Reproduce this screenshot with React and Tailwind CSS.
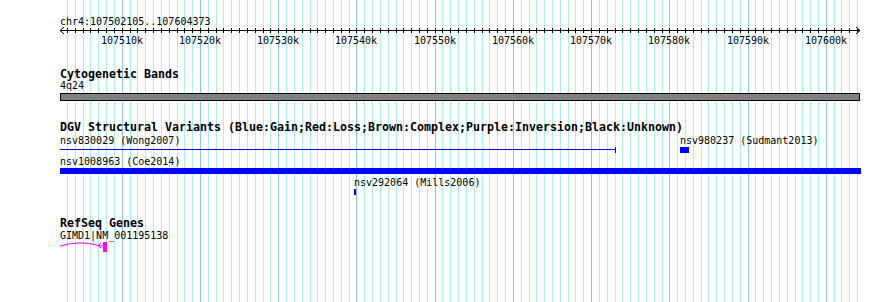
import React from 'react';

const START = 107502105;
const END = 107604373;
const LEFT = 60;
const WIDTH = 800;

const toX = (bp) => Math.round(LEFT + ((bp - START) * WIDTH) / (END - START));

// one entry per kb inside the panel
const ticks = [];
for (let k = Math.ceil(START / 1000); k * 1000 <= END; k++) {
  const x = toX(k * 1000);
  if (x >= LEFT && x <= LEFT + WIDTH) ticks.push({ k, x, major: k % 10 === 0 });
}

const GridLines = () => (
  <svg className="absolute inset-0" width="890" height="302">
    {ticks.map((t) => (
      <line
        key={t.k}
        x1={t.x + 0.5}
        x2={t.x + 0.5}
        y1="0"
        y2="302"
        stroke={t.major ? '#8cc8ee' : '#aeeef0'}
        strokeWidth="1"
      />
    ))}
  </svg>
);

const Ruler = () => (
  <svg width="890" height="68">
    <text x={LEFT} y="25" fontSize="10" fill="#000">
      chr4:107502105..107604373
    </text>
    <line x1={LEFT} x2={LEFT + WIDTH} y1="30.5" y2="30.5" stroke="#000" />
    <polyline points={`${LEFT + 4},27 ${LEFT},30.5 ${LEFT + 4},34`} fill="none" stroke="#000" />
    <polyline
      points={`${LEFT + WIDTH - 4},27 ${LEFT + WIDTH},30.5 ${LEFT + WIDTH - 4},34`}
      fill="none"
      stroke="#000"
    />
    {ticks.map((t) => (
      <line key={t.k} x1={t.x + 0.5} x2={t.x + 0.5} y1="28" y2="33" stroke="#000" />
    ))}
    {ticks
      .filter((t) => t.major)
      .map((t) => (
        <text key={t.k} x={t.x} y="43.5" fontSize="10" textAnchor="middle" fill="#000">
          {t.k}k
        </text>
      ))}
  </svg>
);

const TrackTitle = ({ children }) => (
  <div className="h-[13px] pl-[60px] text-[11.63px] leading-[13px] font-bold text-black whitespace-nowrap">
    {children}
  </div>
);

const Label = ({ x, y, children }) => (
  <text x={x} y={y} fontSize="10" fill="#000">
    {children}
  </text>
);

export default function App() {
  return (
    <div className="relative w-[890px] h-[302px] bg-white overflow-hidden font-['DejaVu_Sans_Mono','Liberation_Mono',monospace]">
      <GridLines />
      <div className="relative flex flex-col">
        <Ruler />

        <TrackTitle>Cytogenetic Bands</TrackTitle>
        <svg width="890" height="40">
          <Label x={LEFT} y="8.3">4q24</Label>
          <rect x={LEFT + 0.5} y="12.5" width={WIDTH - 1} height="7" fill="#808080" stroke="#000" />
        </svg>

        <TrackTitle>
          DGV Structural Variants (Blue:Gain;Red:Loss;Brown:Complex;Purple:Inversion;Black:Unknown)
        </TrackTitle>
        <svg width="890" height="83">
          <Label x={LEFT} y="10">nsv830029 (Wong2007)</Label>
          <line x1={LEFT} x2="615" y1="15.5" y2="15.5" stroke="#0000ee" />
          <line x1="615.5" x2="615.5" y1="13" y2="19" stroke="#0000ee" />

          <Label x="680" y="10">nsv980237 (Sudmant2013)</Label>
          <rect x="680" y="13" width="9" height="6" fill="#0000ff" />

          <Label x={LEFT} y="31">nsv1008963 (Coe2014)</Label>
          <rect x={LEFT} y="34" width="801" height="6" fill="#0000ff" />

          <Label x="354" y="52.3">nsv292064 (Mills2006)</Label>
          <rect x="354" y="55" width="2" height="6" fill="#0000ff" />
        </svg>

        <TrackTitle>RefSeq Genes</TrackTitle>
        <svg width="890" height="72">
          <Label x={LEFT} y="9">GIMD1|NM_001195138</Label>
          <path d="M60 16 Q81 10 98 15.5" fill="none" stroke="#ff00ff" />
          <polyline points="101,13 98,15.5 101,18" fill="none" stroke="#ff00ff" />
          <line x1="98" x2="103" y1="15.5" y2="16" stroke="#ff00ff" />
          <rect x="103" y="12" width="4" height="10" fill="#ff00ff" />
        </svg>
      </div>
    </div>
  );
}
